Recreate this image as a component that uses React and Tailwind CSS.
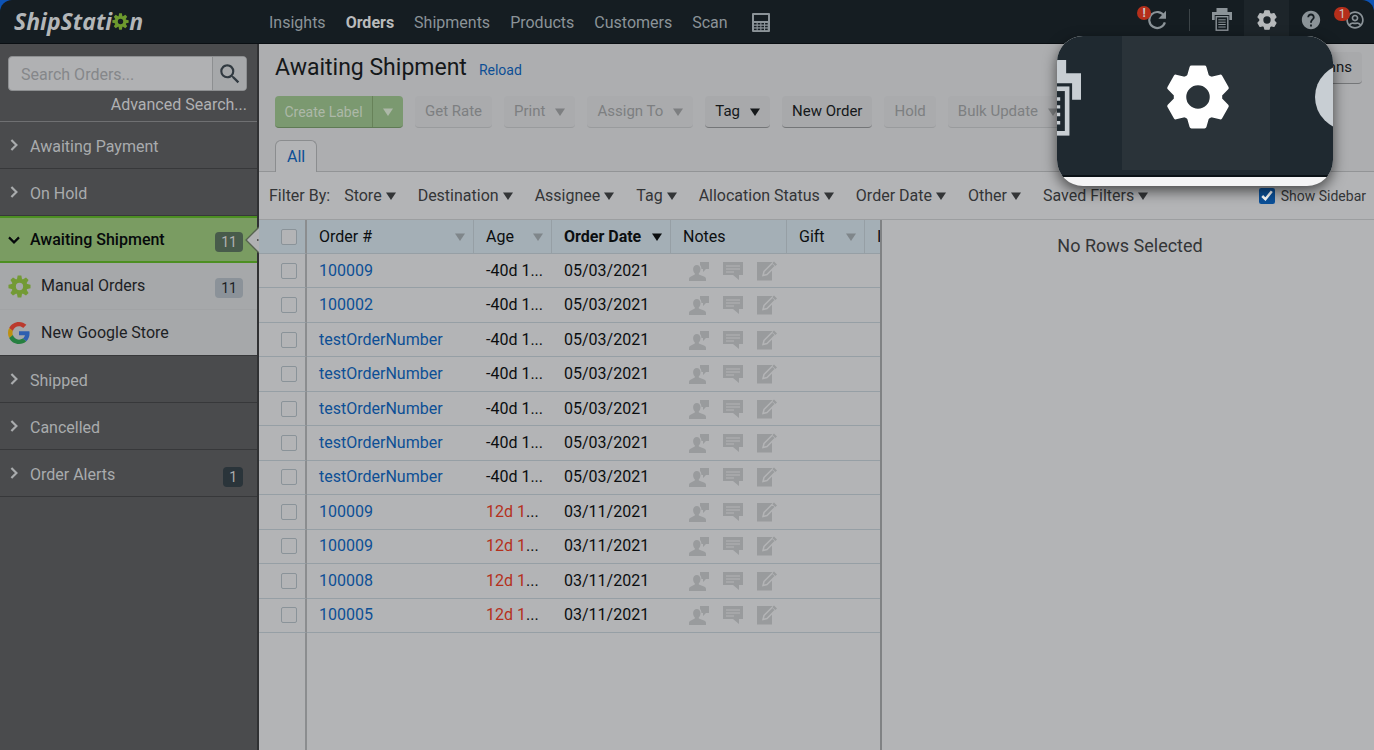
import React, { useState } from 'react';
import { MdHelp, MdSearch } from 'react-icons/md';
import { FaRegUserCircle } from 'react-icons/fa';

const NAV_LINKS = ['Insights', 'Orders', 'Shipments', 'Products', 'Customers', 'Scan'];

const FILTERS = ['Store', 'Destination', 'Assignee', 'Tag', 'Allocation Status', 'Order Date', 'Other', 'Saved Filters'];

const ORDERS = [
  { id: 1, number: '100009', age: '-40d 1...', date: '05/03/2021' },
  { id: 2, number: '100002', age: '-40d 1...', date: '05/03/2021' },
  { id: 3, number: 'testOrderNumber', age: '-40d 1...', date: '05/03/2021' },
  { id: 4, number: 'testOrderNumber', age: '-40d 1...', date: '05/03/2021' },
  { id: 5, number: 'testOrderNumber', age: '-40d 1...', date: '05/03/2021' },
  { id: 6, number: 'testOrderNumber', age: '-40d 1...', date: '05/03/2021' },
  { id: 7, number: 'testOrderNumber', age: '-40d 1...', date: '05/03/2021' },
  { id: 8, number: '100009', age: '12d 1', date: '03/11/2021', late: true },
  { id: 9, number: '100009', age: '12d 1', date: '03/11/2021', late: true },
  { id: 10, number: '100008', age: '12d 1', date: '03/11/2021', late: true },
  { id: 11, number: '100005', age: '12d 1', date: '03/11/2021', late: true },
];

const Caret = ({ className = '' }) => (
  <svg viewBox="0 0 10 8" className={`h-2 w-2.5 shrink-0 ${className}`} fill="currentColor" aria-hidden="true">
    <path d="M0 0.5h10L5 8z" />
  </svg>
);

const Chevron = ({ className = '' }) => (
  <svg viewBox="0 0 12 12" className={`size-3 shrink-0 ${className}`} fill="none" aria-hidden="true">
    <path stroke="currentColor" strokeWidth="2.2" d="M3.4 1l5 5-5 5" />
  </svg>
);

const Cog = ({ className = '' }) => (
  <svg viewBox="-12 -12 24 24" className={className} aria-hidden="true">
    <g fill="currentColor">
      {[0, 45, 90, 135, 180, 225, 270, 315].map((angle) => (
        <path key={angle} d="M-2.8 -7L-1.9 -11.5H1.9L2.8 -7z" transform={`rotate(${angle})`} />
      ))}
    </g>
    <circle r="6" fill="none" stroke="currentColor" strokeWidth="4.4" />
  </svg>
);

// Six-toothed gear of the settings button
const SettingsGear = ({ className = '' }) => (
  <svg viewBox="-32 -32 64 64" className={className} aria-hidden="true">
    <g fill="currentColor" stroke="currentColor" strokeWidth="4" strokeLinejoin="round">
      {[0, 60, 120, 180, 240, 300].map((angle) => (
        <path key={angle} d="M-9.5 -19L-6.500 -29.500H6.500L9.500 -19z" transform={`rotate(${angle})`} />
      ))}
    </g>
    <circle r="18" fill="none" stroke="currentColor" strokeWidth="12.500" />
  </svg>
);

const GoogleLogo = () => (
  <svg viewBox="0 0 48 48" className="size-[22px] shrink-0" aria-hidden="true">
    <path fill="#bb3a2e" d="M24 9.5c3.54 0 6.71 1.22 9.21 3.6l6.85-6.85C35.9 2.38 30.47 0 24 0 14.62 0 6.51 5.38 2.56 13.22l7.98 6.19C12.43 13.72 17.74 9.5 24 9.5z" />
    <path fill="#2f5fb0" d="M46.98 24.55c0-1.57-.15-3.09-.38-4.55H24v9.02h12.94c-.58 2.96-2.26 5.48-4.78 7.18l7.73 6c4.51-4.18 7.09-10.36 7.09-17.65z" />
    <path fill="#bd9010" d="M10.53 28.59c-.48-1.45-.76-2.99-.76-4.59s.27-3.14.76-4.59l-7.98-6.19C.92 16.46 0 20.12 0 24c0 3.88.92 7.54 2.56 10.78l7.97-6.19z" />
    <path fill="#267f40" d="M24 48c6.48 0 11.93-2.13 15.89-5.81l-7.73-6c-2.15 1.45-4.92 2.3-8.16 2.3-6.26 0-11.57-4.22-13.47-9.91l-7.98 6.19C6.51 42.62 14.62 48 24 48z" />
  </svg>
);

const PrinterIcon = ({ className = '' }) => (
  <svg viewBox="0 0 20 23" className={className} aria-hidden="true">
    <path fill="currentColor" d="M4.500 0h11v4H20v8h-2.700V7H2.700v5H0V4h4.500z" />
    <rect x="4.200" y="8.700" width="11.600" height="13.500" fill="none" stroke="currentColor" strokeWidth="1.400" />
    <path stroke="currentColor" strokeWidth="1" d="M6.300 11.800h7.400M6.300 14.200h7.400M6.300 16.500h7.400M6.300 19h7.400" />
  </svg>
);

const CalculatorIcon = () => (
  <svg viewBox="0 0 18 19" className="h-[19px] w-[18px]" aria-hidden="true">
    <rect width="18" height="19" rx="1" fill="#8b9398" />
    <g fill="#151d22">
      <rect x="2" y="2" width="14" height="6" />
      {[2, 5.7, 9.4, 13.1].map((x) =>
        [10, 12.8, 15.6].map((y) => <rect key={`${x}-${y}`} x={x} y={y} width="2.6" height="1.5" />)
      )}
    </g>
  </svg>
);

const RefreshIcon = () => (
  <svg viewBox="0 0 20 20" className="size-5" fill="none" aria-hidden="true">
    <path stroke="currentColor" strokeWidth="2.2" d="M17.2 6A8 8 0 1 0 17.9 12.4" />
    <path fill="currentColor" d="M19 .8v7.9h-7.6z" />
  </svg>
);

const UserNoteIcon = () => (
  <svg viewBox="0 0 20 20" className="size-5" fill="currentColor" aria-hidden="true">
    <path d="M11 1h9v7h-3l-3 3V8h-1.5C12.3 5.5 11.5 4.5 11 4z" />
    <path d="M7.8 4c2.2 0 3.7 1.7 3.7 4s-.9 3.6-1.7 4.3v1.2l5.2 2c1.3.5 2 1.4 2 2.7V20H0v-1.8c0-1.3.7-2.2 2-2.7l3.8-2v-1.2C5 11.6 4.1 10.3 4.1 8s1.5-4 3.7-4z" />
  </svg>
);

const CommentIcon = () => (
  <svg viewBox="0 0 20 20" className="size-5" aria-hidden="true">
    <path fill="currentColor" d="M0 1h20v13h-4v5l-6-5H0z" />
    <path stroke="#b3b4b6" strokeWidth="1.2" d="M3 5h14M3 8h14M3 11h8" />
  </svg>
);

const EditIcon = () => (
  <svg viewBox="0 0 20 20" className="size-5" aria-hidden="true">
    <path fill="currentColor" d="M0 1h15v18.5H0z" />
    <path fill="currentColor" stroke="#b3b4b6" strokeWidth="1.5" d="M6 14.5l1-4L15.5 2l3 3-8.500 8.500z" />
    <path fill="currentColor" d="M15.3 2l1.7-1.5 3 3L18.3 5z" />
  </svg>
);

const TopBar = () => (
  <header className="flex h-11 shrink-0 items-center rounded-t-xl border-b border-[#0a0f13] bg-[#151d22] text-[#8b9398]">
    <a href="#" aria-label="ShipStation" className="flex w-[269px] items-center pb-0.5 pl-3.5 font-['Open_Sans',sans-serif] text-[23px] leading-7 font-bold text-[#b3b6b8] italic">
      ShipStati
      <Cog className="mt-0.5 size-[17px] text-[#6d9a2e]" />
      n
    </a>
    <nav className="flex items-center gap-5 pt-0.5 text-base">
      {NAV_LINKS.map((link) => (
        <a key={link} href="#" className={link === 'Orders' ? 'font-bold text-[#b9bbbc]' : ''}>
          {link}
        </a>
      ))}
      <button type="button" aria-label="Calculator" className="ml-1">
        <CalculatorIcon />
      </button>
    </nav>
    <div className="ml-auto flex h-full items-center pb-1">
      <button type="button" aria-label="Refresh" className="relative mr-[22px]">
        <RefreshIcon />
        <span className="absolute -top-1 -left-2.5 flex h-3.5 w-3.5 items-center justify-center rounded-full bg-[#b52f1b] text-xs font-bold text-[#c9c9c9]">!</span>
      </button>
      <span className="h-[22px] w-px bg-[#3c4448]" />
      <button type="button" aria-label="Print" className="ml-[22px]">
        <PrinterIcon className="h-[23px] w-5" />
      </button>
      <button type="button" aria-label="Settings" className="ml-3 flex h-full w-[45px] items-center justify-center bg-[#1d252a] text-[#b6b9bb]">
        <SettingsGear className="size-5" />
      </button>
      <button type="button" aria-label="Help" className="ml-[11px]">
        <MdHelp className="size-[22px]" />
      </button>
      <button type="button" aria-label="Account" className="relative mr-2.5 ml-6">
        <FaRegUserCircle className="size-[18px]" />
        <span className="absolute -top-1 -left-3 flex h-3.5 w-4 items-center justify-center rounded-full bg-[#b52f1b] text-xs text-[#c9c9c9]">1</span>
      </button>
    </div>
  </header>
);

const StatusItem = ({ label, count }) => (
  <a href="#" className="flex h-[47px] items-center border-b border-[#37383a] px-2 pt-1 pr-3.5 text-[#a9abad]">
    <Chevron className="-mt-1 mr-2.5" />
    {label}
    {count && <span className="mt-1 ml-auto rounded bg-[#2a343a] px-1.5 text-sm leading-5">{count}</span>}
  </a>
);

const Sidebar = () => (
  <aside className="flex w-[259px] shrink-0 flex-col border-r-2 border-[#303133] bg-[#4a4b4d] text-base">
    <div className="border-b border-[#6f7072] pt-3 pr-2.5 pb-1 pl-2">
      <form className="flex h-[35px] w-full overflow-hidden rounded border border-[#8d8f91] bg-[#b0b1b3]">
        <input aria-label="Search Orders" placeholder="Search Orders..." className="w-full min-w-0 flex-1 px-3 pt-0.5 placeholder:text-[#85878a] focus:outline-none" />
        <button type="button" aria-label="Search" className="flex w-[34px] items-center justify-center border-l border-[#8d8f91] bg-[#a6a8aa] text-[#313a41]">
          <MdSearch className="size-[26px]" />
        </button>
      </form>
      <a href="#" className="block pt-0.5 text-right text-[#b0b1b3]">Advanced Search...</a>
    </div>
    <StatusItem label="Awaiting Payment" />
    <StatusItem label="On Hold" />
    <a href="#" className="relative flex h-[47px] items-center border-y-2 border-[#4c8f22] bg-[#7a9c62] pr-3.5 pl-2 font-medium text-[#06090b]">
      <Chevron className="mr-2.5 rotate-90" />
      Awaiting Shipment
      <span className="mt-1 ml-auto rounded bg-[#485b4b] px-1.5 text-sm leading-5 font-normal text-[#b0b1b3]">11</span>
      <svg viewBox="0 0 14 28" className="absolute top-2 -right-0.5 h-7 w-3.5" aria-hidden="true">
        <path fill="#b0b1b3" d="M14 1L1 14l13 13z" />
        <path fill="none" stroke="#56634f" strokeWidth="1.3" d="M14 1L1 14l13 13" />
        <path fill="#555" d="M12 13h1.5v2H12z" />
      </svg>
    </a>
    <div className="bg-[#a6a8aa] text-[#1d2124]">
      <a href="#" className="flex h-[47px] items-center border-b border-[#a1a3a5] pr-3.5 pl-2">
        <Cog className="mr-2.5 size-[23px] shrink-0 text-[#739a35]" />
        Manual Orders
        <span className="mt-1 ml-auto rounded bg-[#8b9299] px-1.5 text-sm leading-5">11</span>
      </a>
      <a href="#" className="flex h-[46px] items-center gap-[11px] border-b border-[#37383a] pl-2">
        <GoogleLogo />
        New Google Store
      </a>
    </div>
    <StatusItem label="Shipped" />
    <StatusItem label="Cancelled" />
    <StatusItem label="Order Alerts" count="1" />
  </aside>
);

const ToolButton = ({ label, caret, active }) => (
  <button
    type="button"
    className={`flex h-8 shrink-0 items-center rounded border-b px-2.5 text-[15px] whitespace-nowrap ${
      active ? 'border-[#747678] bg-[#a8a9ab] text-[#15181a]' : 'border-[#999b9d] bg-[#aaabad] text-[#7d7f81]'
    }`}
  >
    {label}
    {caret && <Caret className="ml-2.5" />}
  </button>
);

const Toolbar = () => (
  <div className="flex gap-3 overflow-hidden pl-4">
    <div className="flex h-8 overflow-hidden rounded border-b border-[#5f7a55] bg-[#7b9970] text-[#adb8a8]">
      <button type="button" className="w-[97px] text-sm">Create Label</button>
      <button type="button" aria-label="More label options" className="flex w-[31px] items-center justify-center border-l border-[#678259]">
        <Caret />
      </button>
    </div>
    <ToolButton label="Get Rate" />
    <ToolButton label="Print" caret />
    <ToolButton label="Assign To" caret />
    <ToolButton label="Tag" caret active />
    <ToolButton label="New Order" active />
    <ToolButton label="Hold" />
    <ToolButton label="Bulk Update" caret />
  </div>
);

const FilterBar = ({ showSidebar, setShowSidebar }) => (
  <div className="flex h-12 shrink-0 items-center border-b border-[#9c9ea0] pr-2 pl-2.5 text-base text-[#333537]">
    <span className="mr-3.5">Filter By:</span>
    <div className="flex gap-[22px]">
      {FILTERS.map((filter) => (
        <button key={filter} type="button" className="flex items-center gap-1 whitespace-nowrap">
          {filter}
          <Caret />
        </button>
      ))}
    </div>
    <label className="ml-auto flex items-center gap-1.5 text-sm whitespace-nowrap">
      <input
        type="checkbox"
        checked={showSidebar}
        onChange={() => setShowSidebar(!showSidebar)}
        className="size-4 accent-[#0b5099]"
      />
      Show Sidebar
    </label>
  </div>
);

const HeaderCell = ({ label, sort, sorted }) => (
  <th className={`border-r border-b border-[#969fa5] pr-2 pl-3 text-left text-[#0b0e10] ${sorted ? 'font-bold' : 'font-normal'}`}>
    <span className="flex items-center justify-between whitespace-nowrap">
      {label}
      {sort && <Caret className={sorted ? '' : 'text-[#7f868a]'} />}
    </span>
  </th>
);

const Checkbox = ({ label }) => (
  <input
    type="checkbox"
    aria-label={label}
    className="block size-4 appearance-none rounded-xs border border-[#8a9399] bg-[#b3b4b6] checked:bg-[#0b5099]"
  />
);

const OrdersGrid = () => (
  <div className="flex min-w-0 flex-1 flex-col overflow-hidden border-r-2 border-[#808284]">
    <table className="h-[413px] w-[710px] shrink-0 table-fixed border-separate border-spacing-0 text-base">
      <colgroup>
        <col className="w-12" />
        <col className="w-[167px]" />
        <col className="w-[78px]" />
        <col className="w-[119px]" />
        <col className="w-[116px]" />
        <col className="w-[78px]" />
        <col className="w-[104px]" />
      </colgroup>
      <thead>
        <tr className="h-[34px] bg-[#a4afb6]">
          <th className="border-r-2 border-b border-r-[#8b8d8f] border-b-[#969fa5] pl-[22px]">
            <Checkbox label="Select all orders" />
          </th>
          <HeaderCell label="Order #" sort />
          <HeaderCell label="Age" sort />
          <HeaderCell label="Order Date" sort sorted />
          <HeaderCell label="Notes" />
          <HeaderCell label="Gift" sort />
          <HeaderCell label="It" />
        </tr>
      </thead>
      <tbody>
        {ORDERS.map((order) => (
          <tr key={order.id} className="*:border-b *:border-b-[#969fa5]">
            <td className="border-r-2 border-r-[#8b8d8f] pl-[22px]">
              <Checkbox label={`Select order ${order.id}`} />
            </td>
            <td className="pl-3">
              <a href="#" className="text-[#0d4f95]">{order.number}</a>
            </td>
            <td className={`pl-3 whitespace-nowrap ${order.late ? 'text-[#b5301c]' : 'text-[#0b0e10]'}`}>
              {order.age}
              {order.late && <span className="text-[#0b0e10]">...</span>}
            </td>
            <td className="pl-3 text-[#0b0e10]">{order.date}</td>
            <td>
              <span className="flex gap-3.5 pl-[18px] text-[#999b9d]">
                <UserNoteIcon />
                <CommentIcon />
                <EditIcon />
              </span>
            </td>
            <td />
            <td />
          </tr>
        ))}
      </tbody>
    </table>
    {/* keeps the checkbox column line running below the last row */}
    <div className="w-12 flex-1 border-r-2 border-[#8b8d8f]" />
  </div>
);

// Enlarged view of the settings button
const SettingsCallout = () => (
  <div className="absolute top-9 right-[41px] flex h-[150px] w-[276px] flex-col overflow-hidden rounded-[26px] bg-[#f4f4f5] shadow-[0_5px_14px_rgba(0,0,0,0.6)]">
    <div className="flex h-[141px] border-b-2 border-[#0a1116] bg-[#1f2930] text-[#c8ced3]">
      <div className="flex w-[65px] shrink-0 justify-end">
        <PrinterIcon className="mt-6 mr-[41px] h-[76px] w-[66px] shrink-0" />
      </div>
      <div className="mb-[5px] flex w-[148px] shrink-0 items-center justify-center bg-[#2a3339] pb-3 pl-1 text-white">
        <SettingsGear className="size-16" />
      </div>
      <div className="w-[63px] shrink-0 pl-[45px]">
        <div className="mt-7 size-[66px] rounded-full bg-current" />
      </div>
    </div>
  </div>
);

const App = () => {
  const [showSidebar, setShowSidebar] = useState(true);

  return (
    <div className="relative flex h-screen flex-col overflow-hidden bg-[#0d53b5] font-[Roboto,sans-serif]">
      <TopBar />
      <div className="flex min-h-0 flex-1">
        <Sidebar />
        <main className="flex min-w-0 flex-1 flex-col bg-[#b3b4b6]">
          <div className="flex h-32 shrink-0 flex-col border-b border-[#929496] bg-[#adaeb0]">
            <div className="flex h-[52px] items-center justify-between pr-3 pb-1 pl-4">
              <div className="flex items-baseline gap-3">
                <h1 className="text-[23px] text-[#15181a]">Awaiting Shipment</h1>
                <a href="#" className="text-sm text-[#0d4f95]">Reload</a>
              </div>
              <ToolButton label="Columns" active />
            </div>
            <Toolbar />
            <div className="mt-auto -mb-px flex pl-4">
              <button type="button" className="h-8 rounded-t-md border border-b-0 border-[#8b8d8f] bg-[#b3b4b6] px-[11px] text-base text-[#0d4f95]">All</button>
            </div>
          </div>
          <FilterBar showSidebar={showSidebar} setShowSidebar={setShowSidebar} />
          <div className="flex min-h-0 flex-1">
            <OrdersGrid />
            {showSidebar && (
              <section className="w-[492px] shrink-0 pt-3 pl-1 text-center text-lg text-[#333537]">No Rows Selected</section>
            )}
          </div>
        </main>
      </div>
      <SettingsCallout />
    </div>
  );
};

export default App;
